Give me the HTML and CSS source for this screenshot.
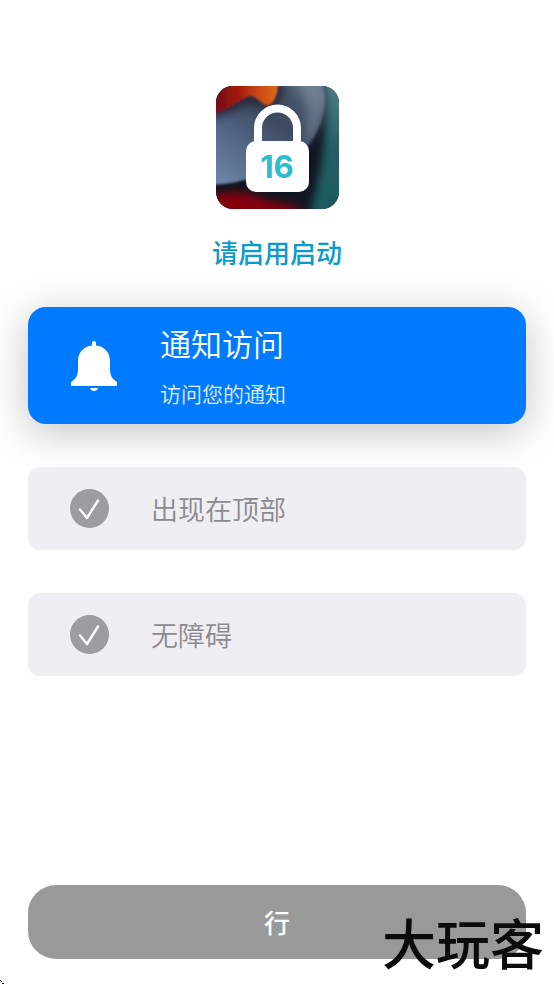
FILE: index.html
```html
<!DOCTYPE html>
<html lang="zh-CN">
<head>
<meta charset="utf-8">
<meta name="viewport" content="width=device-width, initial-scale=1">
<title>请启用启动</title>
<link rel="stylesheet" href="styles.css">
</head>
<body>
<main class="page">
  <header class="intro">
    <svg class="app-icon" viewBox="0 0 123 123" aria-hidden="true">
      <defs>
        <clipPath id="tile"><rect width="123" height="123" rx="17"/></clipPath>
        <linearGradient id="slate" x1="0" y1="1" x2="0.8" y2="0">
          <stop offset="0" stop-color="#7189ab"/>
          <stop offset="0.35" stop-color="#55698a"/>
          <stop offset="0.65" stop-color="#3d4a60"/>
          <stop offset="0.85" stop-color="#465468"/>
          <stop offset="1" stop-color="#5f7086"/>
        </linearGradient>
        <linearGradient id="flame" gradientUnits="userSpaceOnUse" x1="0" y1="10" x2="62" y2="10">
          <stop offset="0" stop-color="#740d14"/>
          <stop offset="0.35" stop-color="#a3170f"/>
          <stop offset="0.65" stop-color="#c74415"/>
          <stop offset="1" stop-color="#e06a17"/>
        </linearGradient>
        <linearGradient id="teal" x1="0" y1="0" x2="0" y2="1">
          <stop offset="0" stop-color="#55848a"/>
          <stop offset="0.5" stop-color="#245e65"/>
          <stop offset="1" stop-color="#1b5960"/>
        </linearGradient>
        <filter id="soft" x="-30%" y="-30%" width="160%" height="160%"><feGaussianBlur stdDeviation="4"/></filter>
        <filter id="edge" x="-10%" y="-10%" width="120%" height="120%"><feGaussianBlur stdDeviation="1"/></filter>
      </defs>
      <g clip-path="url(#tile)">
        <rect width="123" height="123" fill="#101522"/>
        <path d="M106-10C114 30 108 80 92 135H145V-10Z" fill="url(#teal)" filter="url(#soft)"/>
        <path d="M-5-5H106C113 16 107 42 90 62C66 86 25 98-5 99Z" fill="url(#slate)" filter="url(#edge)"/>
        <path d="M80-5H106C112 18 106 44 88 62C92 36 94 16 80-5Z" fill="#7b8ca0" opacity=".55" filter="url(#soft)"/>
        <path d="M-5 33C15 29 24 20 36 18C44 19 49 26 58 24C66 18 68 8 68-5H-5Z" fill="#25233a" opacity=".8" filter="url(#soft)"/>
        <path d="M-5 28C12 26 22 13 34 10C43 11 47 21 53 19C60 15 62 6 62-5H-5Z" fill="url(#flame)" filter="url(#edge)"/>
        <path d="M-5 110C15 103 32 106 48 113C62 119 80 115 91 130H-5Z" fill="#850611" filter="url(#soft)"/>
      </g>
      <path d="M42 60V42a19.500 19.500 0 0 1 39 0V60" fill="none" stroke="#fff" stroke-width="8"/>
      <rect x="30" y="55" width="63" height="51" rx="10" fill="#fff"/>
      <text class="app-icon-number" x="61" y="92" text-anchor="middle">16</text>
    </svg>
    <h1 class="title">请启用启动</h1>
  </header>

  <section class="permissions">
    <button class="card" type="button">
      <svg class="bell" viewBox="0 0 46 50" aria-hidden="true">
        <path d="M21 4.500V2a2 2 0 0 1 4 0v2.500C33 5.500 39 11 39 20V28C39 34 41 38 46 41V45H0V41C5 38 7 34 7 28V20C7 11 13 5.500 21 4.500Z" fill="#fff"/>
        <path d="M19 47H27Q26 50 23 50Q20 50 19 47Z" fill="#fff"/>
      </svg>
      <span class="card-text">
        <span class="card-title">通知访问</span>
        <span class="card-note">访问您的通知</span>
      </span>
    </button>
    <button class="row" type="button">
      <svg class="check" viewBox="0 0 39 39" aria-hidden="true">
        <circle cx="19.500" cy="19.500" r="19.500" fill="#9d9ca1"/>
        <path d="M10 20.500L17 29L28 11.500" fill="none" stroke="#fff" stroke-width="2.400" stroke-linecap="round" stroke-linejoin="round"/>
      </svg>
      <span>出现在顶部</span>
    </button>
    <button class="row" type="button">
      <svg class="check" viewBox="0 0 39 39" aria-hidden="true">
        <circle cx="19.500" cy="19.500" r="19.500" fill="#9d9ca1"/>
        <path d="M10 20.500L17 29L28 11.500" fill="none" stroke="#fff" stroke-width="2.400" stroke-linecap="round" stroke-linejoin="round"/>
      </svg>
      <span>无障碍</span>
    </button>
  </section>

  <button class="confirm" type="button">行</button>
  <span class="watermark">大玩客</span>
  <svg class="corner" viewBox="0 0 4 4" aria-hidden="true"><path d="M0 0h1v1h-1zM1 1h1v1h-1zM2 3h2v1h-2z" fill="#000"/></svg>
</main>
</body>
</html>
```
FILE: styles.css
```css
* {
  box-sizing: border-box;
}

body {
  margin: 0;
  background: #fff;
  font-family: "Noto Sans CJK SC", sans-serif;
}

button {
  border: 0;
  font-family: inherit;
  text-align: left;
  cursor: pointer;
}

.page {
  position: relative;
  display: flex;
  flex-direction: column;
  min-height: 100vh;
  padding: 86px 28px 25px;
}

.intro {
  display: flex;
  flex-direction: column;
  align-items: center;
  gap: 24px;
}

.app-icon {
  width: 123px;
  height: 123px;
}

.app-icon-number {
  fill: #2cbbd0;
  font-family: Inter, sans-serif;
  font-size: 31px;
  font-weight: 700;
}

.title {
  margin: 0;
  color: #0a9bcb;
  font-size: 26px;
  font-weight: 500;
  line-height: 38px;
}

.permissions {
  display: flex;
  flex-direction: column;
  gap: 43px;
  margin: 36px 0;
}

.card {
  display: flex;
  align-items: center;
  gap: 43px;
  min-height: 117px;
  padding: 12px 43px;
  border-radius: 18px;
  background: #007aff;
  box-shadow: 0 8px 40px rgba(0, 0, 0, 0.24);
  color: #fff;
}

.bell {
  flex: none;
  width: 46px;
  height: 50px;
}

.card-text {
  display: flex;
  flex-direction: column;
  gap: 12px;
  padding-bottom: 2px;
}

.card-title {
  font-size: 31px;
  font-weight: 350;
  line-height: 44px;
}

.card-note {
  color: #e0edfc;
  font-size: 21px;
  font-weight: 350;
  line-height: 32px;
}

.row {
  display: flex;
  align-items: center;
  gap: 42px;
  min-height: 83px;
  padding: 12px 42px;
  border-radius: 12px;
  background: #efeef3;
  color: #8b8a8f;
  font-size: 27px;
  font-weight: 350;
  line-height: 40px;
}

.check {
  flex: none;
  width: 39px;
  height: 39px;
}

.confirm {
  min-height: 74px;
  margin-top: auto;
  padding: 0 0 2px;
  border-radius: 28px;
  background: #999;
  color: #fff;
  font-size: 26px;
  font-weight: 500;
  text-align: center;
}

.watermark {
  position: absolute;
  right: 10px;
  bottom: 0;
  color: #0b0b0b;
  font-size: 54px;
  font-weight: 500;
  line-height: 84px;
  pointer-events: none;
}

.corner {
  position: absolute;
  bottom: 0;
  left: 0;
  width: 4px;
  height: 4px;
}
```
